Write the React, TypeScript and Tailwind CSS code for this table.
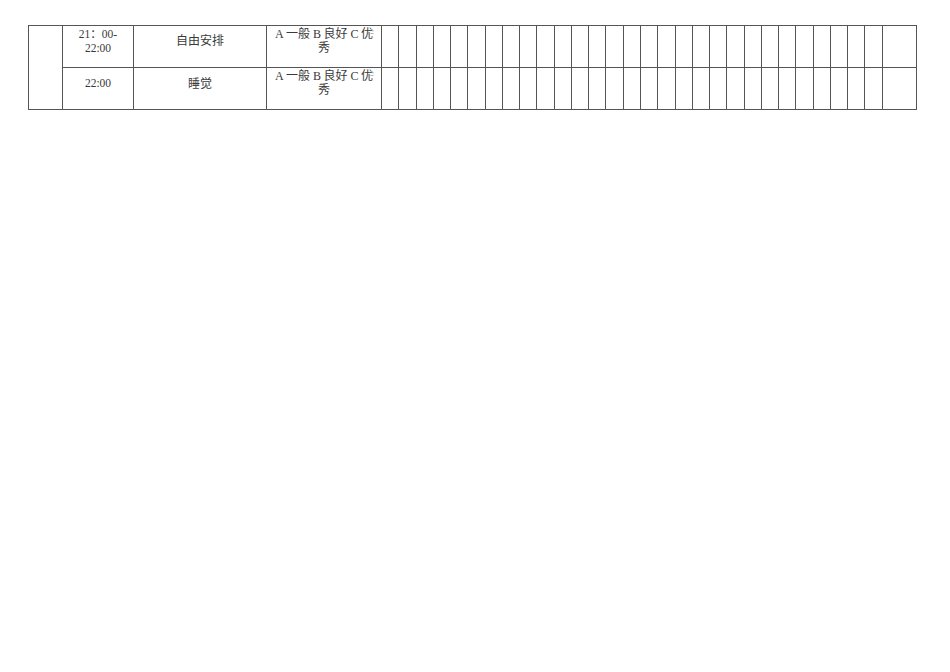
import React from "react";

const font = {
  fontFamily: '"Liberation Serif", "Noto Sans CJK SC", serif',
};

function Mark() {
  return (
    <svg
      className="absolute right-[7px] top-[3px]"
      width="4"
      height="6"
      viewBox="0 0 4 6"
    >
      <path d="M1 0.5 L2.5 0.5 M3 1 L3 2.5 M0.5 4.5 L3.5 4.5" stroke="#b0b0b0" strokeWidth="1" fill="none" />
    </svg>
  );
}

export default function App() {
  const rows = [
    { time: ["21：00-", "22:00"], act: "自由安排" },
    { time: ["22:00"], act: "睡觉" },
  ];
  const small = Array.from({ length: 29 });
  const cell = "border-r border-b border-[#555] relative";
  return (
    <div className="w-[950px] h-[672px] bg-white pt-[25px] pl-[28px]" style={font}>
      <div className="grid grid-cols-[34px_71px_133px_115px_repeat(29,17.28px)_34px] grid-rows-[42px_42px] border-t border-l border-[#555] w-[889px] text-[12px] leading-[14px] text-[#3a3a3a]">
        <div className={`${cell} row-span-2`} />
        {rows.map((r, i) => (
          <React.Fragment key={i}>
            <div
              className={`${cell} text-center text-[11.5px] ${r.time.length > 1 ? "pt-[1px]" : "pt-[8px]"}`}
            >
              {r.time.map((t, j) => (
                <div key={j}>{t}</div>
              ))}
            </div>
            <div className={`${cell} text-center ${i === 0 ? "pt-[8px]" : "pt-[9px]"}`}>{r.act}</div>
            <div className={`${cell} text-center pt-[1px] px-[2px] whitespace-nowrap`}>
              <div>A{"\u2009"}一般 B{"\u2009"}良好 C{"\u2009"}优</div>
              <div>秀</div>
              <Mark />
            </div>
            {small.map((_, k) => (
              <div key={k} className={cell} />
            ))}
            <div className={cell} />
          </React.Fragment>
        ))}
      </div>
    </div>
  );
}
